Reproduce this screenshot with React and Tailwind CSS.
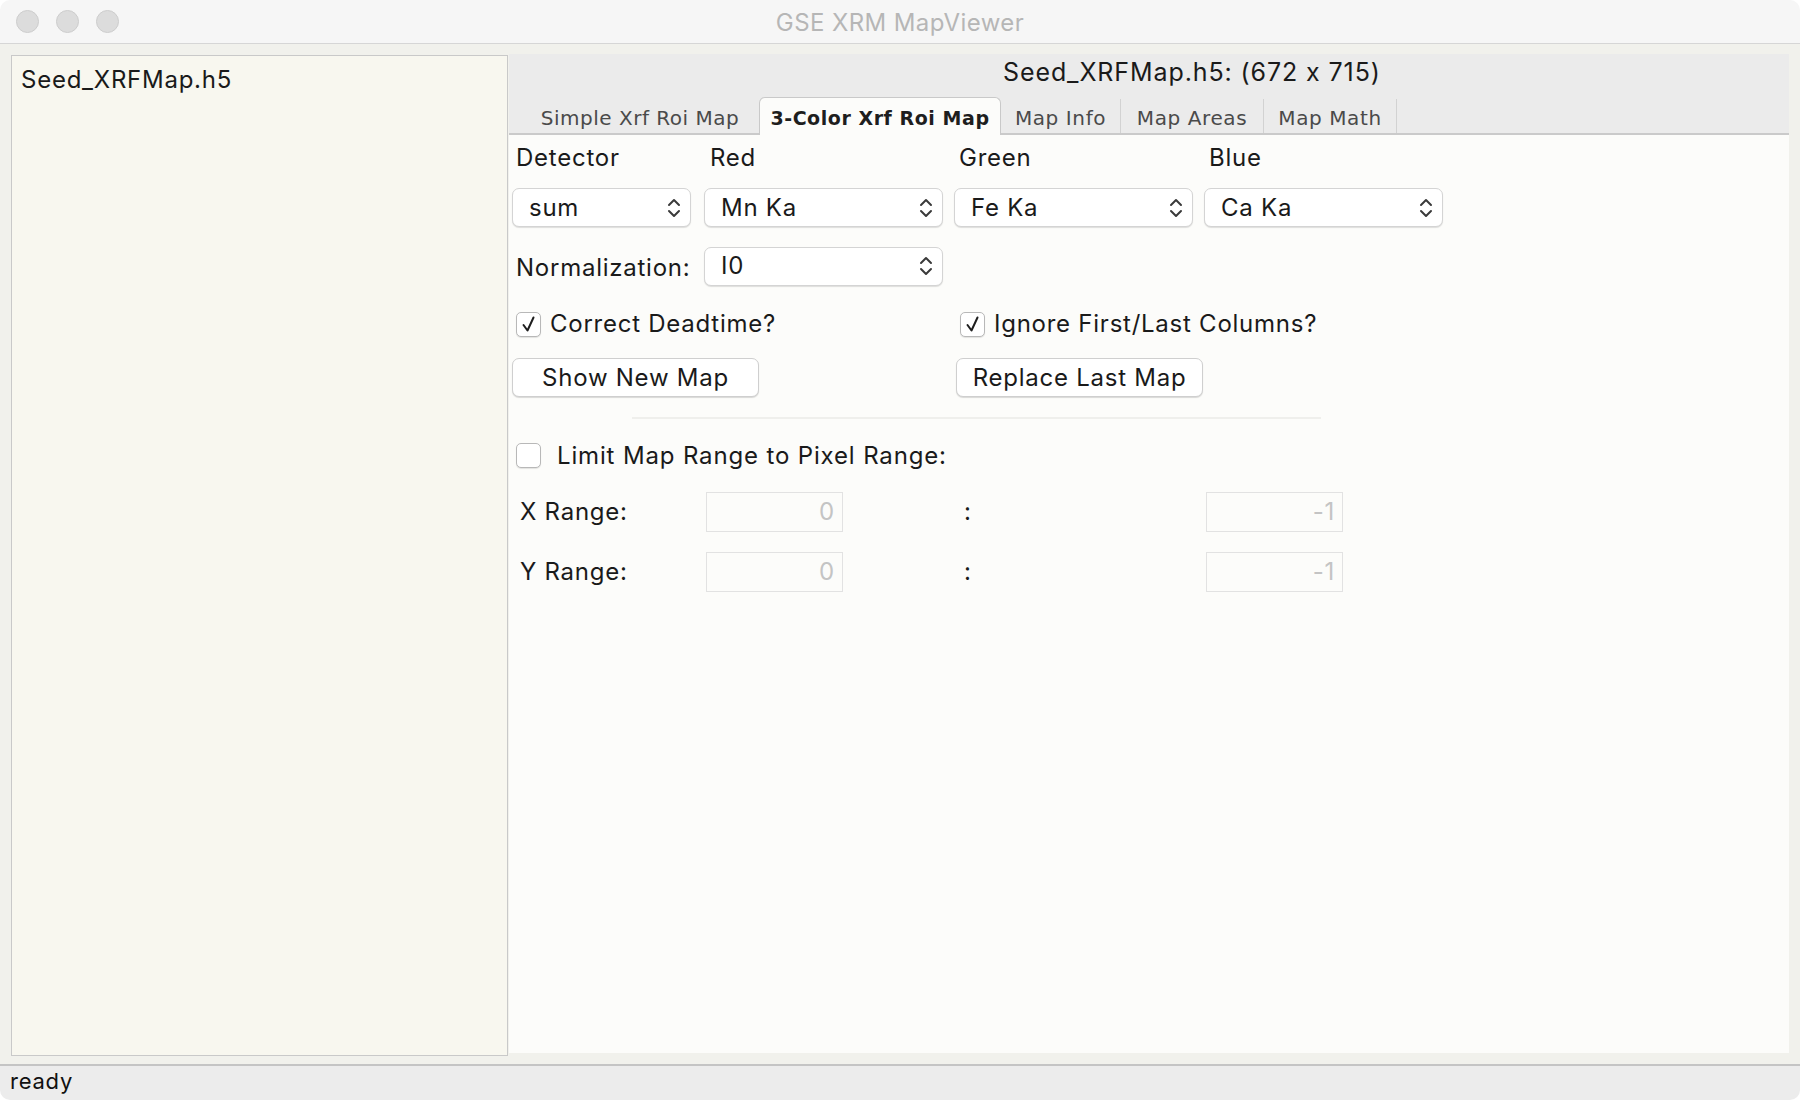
import React from "react";

const ui = "font-['Inter',sans-serif] tracking-[0.75px] text-[24px] text-[#1a1a1a]";
const tabFont = "font-['DejaVu_Sans',sans-serif] text-[20px]";

const Chevrons = () => (
  <svg width="16" height="24" viewBox="0 0 16 24" fill="none" stroke="#3a3a3a" strokeWidth="2" strokeLinecap="round" strokeLinejoin="round">
    <polyline points="3,9 8,4 13,9" />
    <polyline points="3,15 8,20 13,15" />
  </svg>
);

const Select = ({ value, w }) => (
  <div className={`${w} h-[39px] flex items-center justify-between pl-[16px] pr-[8px] bg-white border border-[#d4d4d4] rounded-[7px] shadow-[0_1px_1px_rgba(0,0,0,0.12)]`}>
    <span>{value}</span>
    <Chevrons />
  </div>
);

const Check = ({ checked }) => (
  <div className="w-[25px] h-[25px] shrink-0 rounded-[5px] border border-[#b8b8b8] bg-white flex items-center justify-center shadow-[0_1px_1px_rgba(0,0,0,0.1)]">
    {checked && (
      <svg width="20" height="20" viewBox="0 0 20 20" fill="none" stroke="#1e1e1e" strokeWidth="2" strokeLinecap="round" strokeLinejoin="round">
        <path d="M4.5 11 L8.5 16.5 L14.5 3.5" />
      </svg>
    )}
  </div>
);

const Button = ({ children }) => (
  <div className="w-[247px] h-[39px] flex items-center justify-center bg-white border border-[#cfcfcf] rounded-[7px] shadow-[0_1px_1px_rgba(0,0,0,0.14)]">
    {children}
  </div>
);

const RangeInput = ({ value }) => (
  <div className="w-[137px] h-[40px] flex items-center justify-end pr-[7px] border border-[#e2e2e2] bg-[#fcfcfa] text-[#c4c4c4]">
    {value}
  </div>
);

const Light = () => <div className="w-[23px] h-[23px] rounded-full bg-[#dcdcdc] border border-[#cdcdcd]" />;

export default function App() {
  const row = "grid grid-cols-[192px_250px_250px_250px]";

  return (
    <div className={`w-[1800px] h-[1100px] flex flex-col bg-white ${ui}`}>
      {/* title bar */}
      <div className="h-[44px] shrink-0 grid grid-cols-[1fr_auto_1fr] items-center bg-[#f6f6f6] border-b border-[#d6d6d6] rounded-t-[10px]">
        <div className="flex items-center gap-[17px] pl-[16px]">
          <Light />
          <Light />
          <Light />
        </div>
        <div className="text-[#b6b6b6] tracking-[0.4px] pt-[2px]">GSE XRM MapViewer</div>
        <div />
      </div>

      {/* body */}
      <div className="flex-1 flex bg-[#f1f1ec] pl-[11px] pr-[11px] pt-[10px] pb-[8px]">
        <div className="w-[497px] mt-[1px] bg-[#f8f7ef] border border-[#c9c9c9] pl-[9px] pt-[6px]">
          Seed_XRFMap.h5
        </div>

        <div className="flex-1 ml-[1px] mb-[3px] flex flex-col">
          <div className="h-[38px] flex items-center pl-[494px] bg-[#ebebeb] text-[25px] tracking-[0.9px]">Seed_XRFMap.h5: (672 x 715)</div>

          <div className={`h-[43px] flex items-end pl-[12px] bg-[#ebebeb] border-b-2 border-[#cacaca] ${tabFont}`}>
            <div className="w-[238px] h-[34px] pt-[4px] flex items-center justify-center text-[#4a4a4a] tracking-[0.5px]">Simple Xrf Roi Map</div>
            <div className="relative w-[242px] h-[38px] mb-[-2px] pt-[3px] flex items-center justify-center bg-[#fcfcfa] border border-b-0 border-[#c9c9c9] rounded-t-[6px] font-bold text-[19px] tracking-[0.55px] text-[#1e1e1e]">
              3-Color Xrf Roi Map
            </div>
            <div className="w-[120px] h-[34px] pt-[4px] flex items-center justify-center text-[#4a4a4a] tracking-[0.6px] border-r border-[#d2d2d2]">Map Info</div>
            <div className="w-[143px] h-[34px] pt-[4px] flex items-center justify-center text-[#4a4a4a] tracking-[0.6px] border-r border-[#d2d2d2]">Map Areas</div>
            <div className="w-[133px] h-[34px] pt-[4px] flex items-center justify-center text-[#4a4a4a] tracking-[0.6px] border-r border-[#d2d2d2]">Map Math</div>
          </div>

          <div className="flex-1 bg-[#fcfcfa] pl-[3px]">
            <div className={`${row} h-[45px] items-center pt-[1px]`}>
              <div className="pl-[4px]">Detector</div>
              <div className="pl-[6px]">Red</div>
              <div className="pl-[5px]">Green</div>
              <div className="pl-[5px]">Blue</div>
            </div>

            <div className={`${row} mt-[8px]`}>
              <Select value="sum" w="w-[179px]" />
              <Select value="Mn Ka" w="w-[239px]" />
              <Select value="Fe Ka" w="w-[239px]" />
              <Select value="Ca Ka" w="w-[239px]" />
            </div>

            <div className={`${row} mt-[19px] items-center`}>
              <div className="pl-[4px] pt-[4px]">Normalization:</div>
              <Select value="I0" w="w-[239px]" />
            </div>

            <div className={`${row} mt-[20px] h-[25px] items-center`}>
              <div className="col-span-2 pl-[4px] flex items-center gap-[9px]">
                <Check checked />
                <span>Correct Deadtime?</span>
              </div>
              <div className="col-span-2 pl-[6px] flex items-center gap-[9px]">
                <Check checked />
                <span>Ignore First/Last Columns?</span>
              </div>
            </div>

            <div className={`${row} mt-[27px]`}>
              <div className="col-span-2">
                <Button>Show New Map</Button>
              </div>
              <div className="col-span-2 pl-[2px]">
                <Button>Replace Last Map</Button>
              </div>
            </div>

            <div className="mt-[20px] ml-[120px] w-[689px] h-[2px] bg-[#efefec]" />

            <div className="mt-[24px] pl-[4px] h-[25px] flex items-center gap-[16px]">
              <Check />
              <span className="tracking-[0.85px]">Limit Map Range to Pixel Range:</span>
            </div>

            <div className={`${row} mt-[24px] items-center`}>
              <div className="pl-[8px]">X Range:</div>
              <div className="pl-[2px]"><RangeInput value="0" /></div>
              <div className="pl-[10px]">:</div>
              <div className="pl-[2px]"><RangeInput value="-1" /></div>
            </div>

            <div className={`${row} mt-[20px] items-center`}>
              <div className="pl-[8px]">Y Range:</div>
              <div className="pl-[2px]"><RangeInput value="0" /></div>
              <div className="pl-[10px]">:</div>
              <div className="pl-[2px]"><RangeInput value="-1" /></div>
            </div>
          </div>
        </div>
      </div>

      {/* status bar */}
      <div className="h-[36px] shrink-0 flex items-center pl-[10px] pb-[3px] bg-[#ececec] border-t-2 border-[#c4c4c4] rounded-b-[10px] text-[22px] text-[#111]">
        ready
      </div>
    </div>
  );
}
